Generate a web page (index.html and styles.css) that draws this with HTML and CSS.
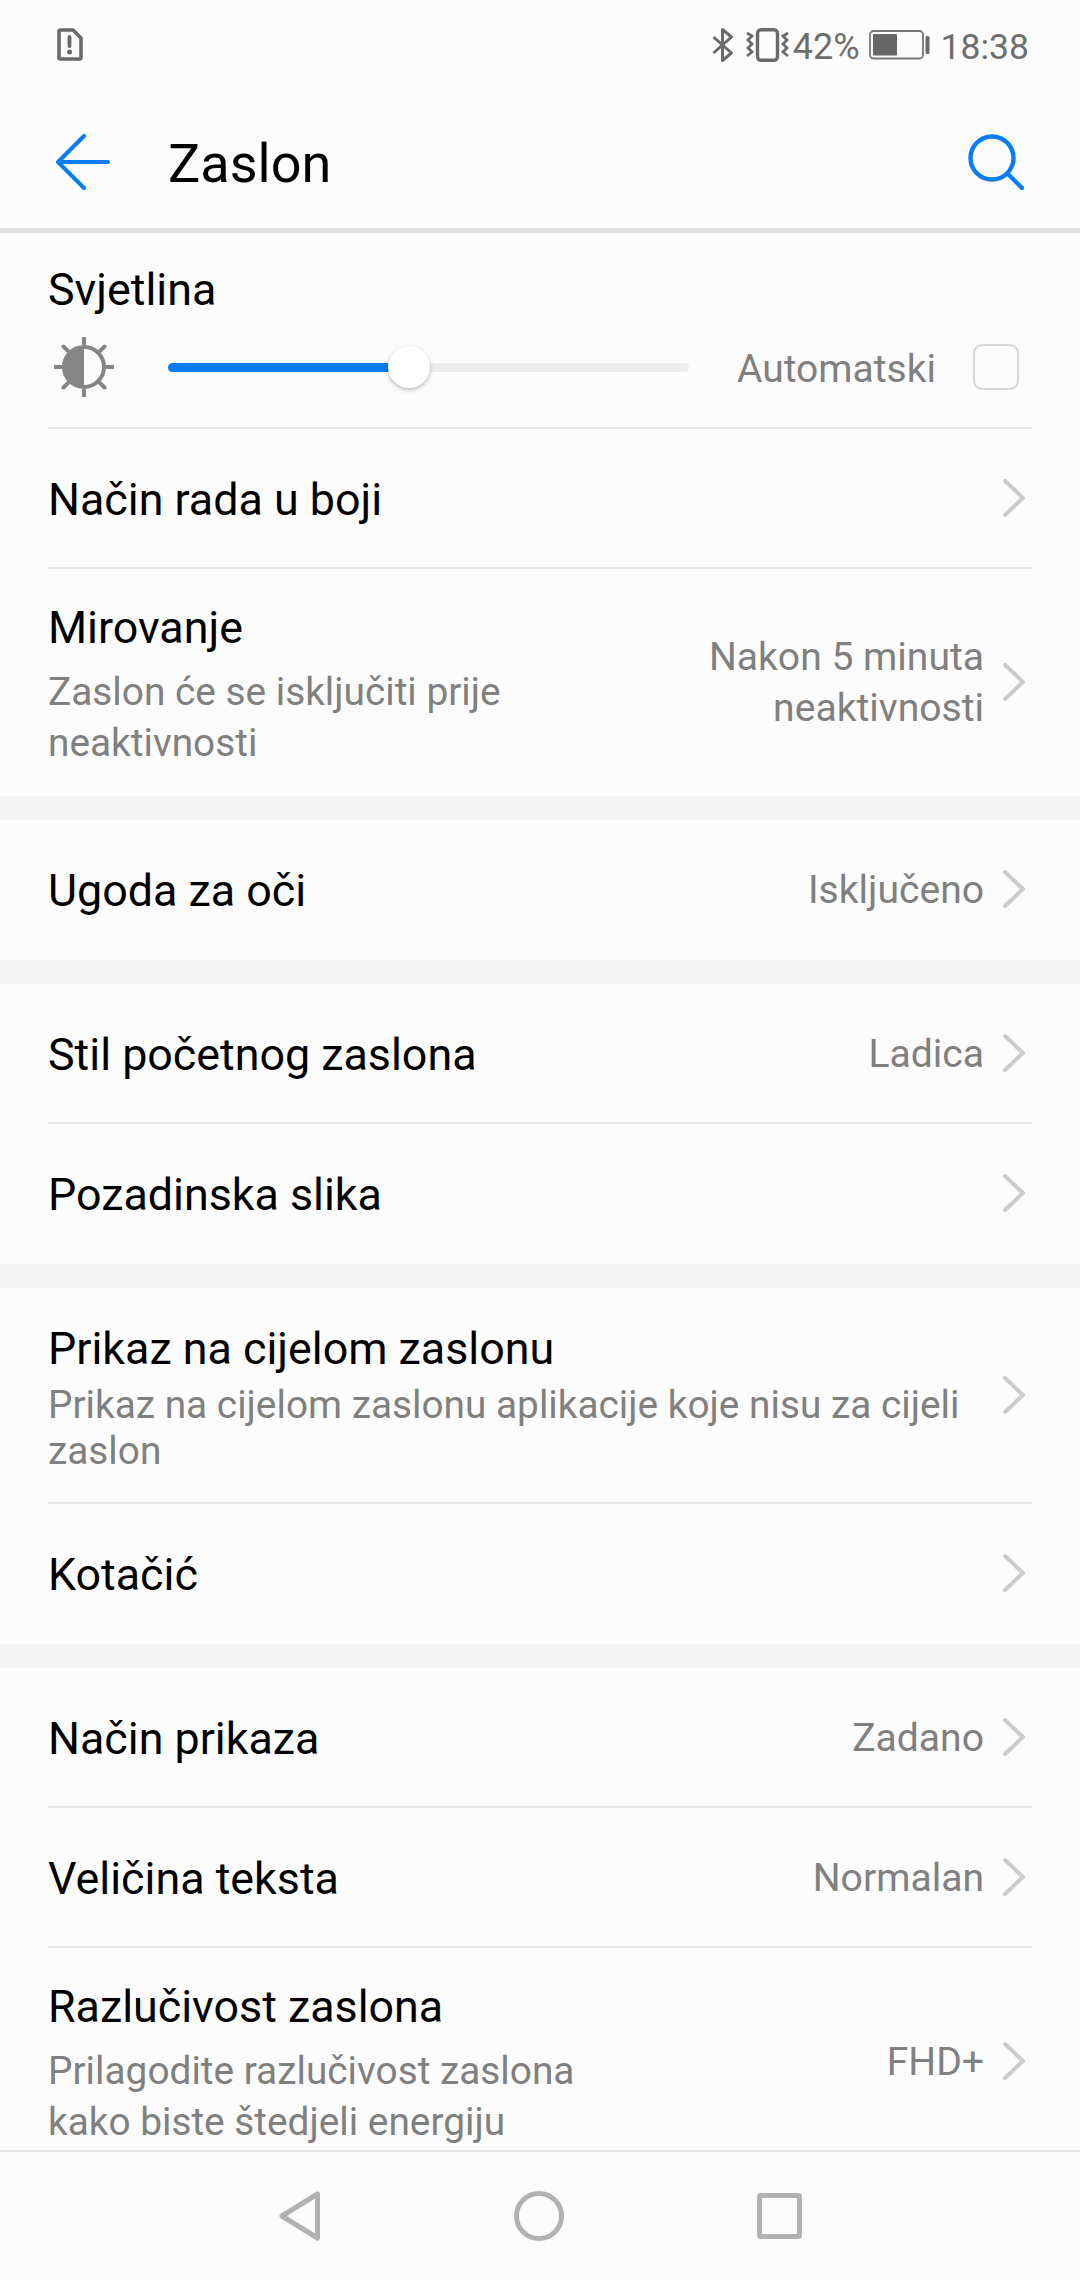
FILE: index.html
```html
<!DOCTYPE html>
<html lang="hr">
<head>
	<meta charset="UTF-8">
	<title>Zaslon</title>
	<link rel="stylesheet" href="styles.css">
</head>
<body>
<div class="phone">
	<div class="status">
		<svg class="ic-sim" width="26" height="33" viewBox="0 0 26 33"><path d="M4 2H16L24 10V29.500Q24 31 22.500 31H4Q2 31 2 29.500V3.500Q2 2 4 2Z" fill="none" stroke="#6a6a6a" stroke-width="3.600" stroke-linejoin="round"/><path d="M12.500 9V18" stroke="#6a6a6a" stroke-width="3.800" stroke-linecap="round"/><circle cx="12.500" cy="24" r="2.500" fill="#6a6a6a"/></svg>
		<div class="status-right">
			<svg class="ic-bt" width="22" height="34" viewBox="0 0 22 34"><path d="M1.500 9L19.500 25L10.500 32.500V1.500L19.500 9L1.500 25" fill="none" stroke="#6a6a6a" stroke-width="3" stroke-linejoin="round"/></svg>
			<svg class="ic-vib" width="43" height="34" viewBox="0 0 43 34"><rect x="11.500" y="1.800" width="20" height="30.400" rx="3.500" fill="none" stroke="#6a6a6a" stroke-width="3.400"/><path d="M1 5L6 8L2 12L6 16L2 20L6 24L1 28M42 5L37 8L41 12L37 16L41 20L37 24L42 28" fill="none" stroke="#6a6a6a" stroke-width="2.800"/></svg>
			<span class="pct">42%</span>
			<svg class="ic-bat" width="61" height="30" viewBox="0 0 61 30"><rect x="1" y="1" width="53" height="27.500" rx="3.500" fill="none" stroke="#777" stroke-width="1.800"/><rect x="4" y="4" width="24" height="21.500" rx="1" fill="#666"/><rect x="56.500" y="6" width="4" height="18" rx="1.500" fill="#6a6a6a"/></svg>
			<span class="clock">18:38</span>
		</div>
	</div>

	<div class="header">
		<svg class="ic-back" width="54" height="56" viewBox="0 0 54 56"><path d="M28 2L2 28L28 54M2 28H52" fill="none" stroke="#0a7df5" stroke-width="4" stroke-linecap="round" stroke-linejoin="round"/></svg>
		<div class="header-title">Zaslon</div>
		<svg class="ic-search" width="56" height="56" viewBox="0 0 56 56"><circle cx="24" cy="24" r="21.500" fill="none" stroke="#0a7df5" stroke-width="4.400"/><path d="M40 40L54 54" stroke="#0a7df5" stroke-width="4.400" stroke-linecap="round"/></svg>
	</div>

	<div class="list">
		<div class="section">
			<div class="brightness">
				<div class="title">Svjetlina</div>
				<div class="bright-row">
					<svg class="ic-sun" width="60" height="60" viewBox="0 0 60 60">
						<path d="M30 9A21 21 0 0 0 30 51Z" fill="#858585"/>
						<circle cx="30" cy="30" r="20" fill="none" stroke="#858585" stroke-width="4"/>
						<path d="M30 1V7M30 53V59M1 30H7M53 30H59M9.500 9.500L13.800 13.800M46.200 46.200L50.500 50.500M9.500 50.500L13.800 46.200M46.200 13.800L50.500 9.500" stroke="#858585" stroke-width="4" stroke-linecap="round"/>
					</svg>
					<div class="slider">
						<div class="slider-fill"></div>
						<div class="slider-thumb"></div>
					</div>
					<span class="auto">Automatski</span>
					<span class="check"></span>
				</div>
			</div>
			<div class="row">
				<div class="row-main"><div class="title">Način rada u boji</div></div>
				<svg class="chev" width="22" height="38" viewBox="0 0 22 38"><path d="M2 2L20 19L2 36" fill="none" stroke="#cbcbcb" stroke-width="4" stroke-linecap="round" stroke-linejoin="round"/></svg>
			</div>
			<div class="row row-tall">
				<div class="row-main">
					<div class="title">Mirovanje</div>
					<div class="sub">Zaslon će se isključiti prije<br>neaktivnosti</div>
				</div>
				<div class="value">Nakon 5 minuta<br>neaktivnosti</div>
				<svg class="chev" width="22" height="38" viewBox="0 0 22 38"><path d="M2 2L20 19L2 36" fill="none" stroke="#cbcbcb" stroke-width="4" stroke-linecap="round" stroke-linejoin="round"/></svg>
			</div>
		</div>

		<div class="section">
			<div class="row">
				<div class="row-main"><div class="title">Ugoda za oči</div></div>
				<div class="value">Isključeno</div>
				<svg class="chev" width="22" height="38" viewBox="0 0 22 38"><path d="M2 2L20 19L2 36" fill="none" stroke="#cbcbcb" stroke-width="4" stroke-linecap="round" stroke-linejoin="round"/></svg>
			</div>
		</div>

		<div class="section">
			<div class="row">
				<div class="row-main"><div class="title">Stil početnog zaslona</div></div>
				<div class="value">Ladica</div>
				<svg class="chev" width="22" height="38" viewBox="0 0 22 38"><path d="M2 2L20 19L2 36" fill="none" stroke="#cbcbcb" stroke-width="4" stroke-linecap="round" stroke-linejoin="round"/></svg>
			</div>
			<div class="row">
				<div class="row-main"><div class="title">Pozadinska slika</div></div>
				<svg class="chev" width="22" height="38" viewBox="0 0 22 38"><path d="M2 2L20 19L2 36" fill="none" stroke="#cbcbcb" stroke-width="4" stroke-linecap="round" stroke-linejoin="round"/></svg>
			</div>
		</div>

		<div class="section">
			<div class="row row-full">
				<div class="row-main">
					<div class="title">Prikaz na cijelom zaslonu</div>
					<div class="sub sub-tight">Prikaz na cijelom zaslonu aplikacije koje nisu za cijeli<br>zaslon</div>
				</div>
				<svg class="chev" width="22" height="38" viewBox="0 0 22 38"><path d="M2 2L20 19L2 36" fill="none" stroke="#cbcbcb" stroke-width="4" stroke-linecap="round" stroke-linejoin="round"/></svg>
			</div>
			<div class="row">
				<div class="row-main"><div class="title">Kotačić</div></div>
				<svg class="chev" width="22" height="38" viewBox="0 0 22 38"><path d="M2 2L20 19L2 36" fill="none" stroke="#cbcbcb" stroke-width="4" stroke-linecap="round" stroke-linejoin="round"/></svg>
			</div>
		</div>

		<div class="section">
			<div class="row">
				<div class="row-main"><div class="title">Način prikaza</div></div>
				<div class="value">Zadano</div>
				<svg class="chev" width="22" height="38" viewBox="0 0 22 38"><path d="M2 2L20 19L2 36" fill="none" stroke="#cbcbcb" stroke-width="4" stroke-linecap="round" stroke-linejoin="round"/></svg>
			</div>
			<div class="row">
				<div class="row-main"><div class="title">Veličina teksta</div></div>
				<div class="value">Normalan</div>
				<svg class="chev" width="22" height="38" viewBox="0 0 22 38"><path d="M2 2L20 19L2 36" fill="none" stroke="#cbcbcb" stroke-width="4" stroke-linecap="round" stroke-linejoin="round"/></svg>
			</div>
			<div class="row row-tall">
				<div class="row-main">
					<div class="title">Razlučivost zaslona</div>
					<div class="sub">Prilagodite razlučivost zaslona<br>kako biste štedjeli energiju</div>
				</div>
				<div class="value">FHD+</div>
				<svg class="chev" width="22" height="38" viewBox="0 0 22 38"><path d="M2 2L20 19L2 36" fill="none" stroke="#cbcbcb" stroke-width="4" stroke-linecap="round" stroke-linejoin="round"/></svg>
			</div>
		</div>
	</div>

	<div class="nav">
		<svg width="42" height="50" viewBox="0 0 42 50"><path d="M38.500 3L3 25L38.500 47Z" fill="none" stroke="#b2b2b2" stroke-width="5" stroke-linejoin="round"/></svg>
		<svg width="50" height="50" viewBox="0 0 50 50"><circle cx="25" cy="25" r="22.500" fill="none" stroke="#b2b2b2" stroke-width="5"/></svg>
		<svg width="45" height="46" viewBox="0 0 45 46"><rect x="2.500" y="2.500" width="40" height="41" rx="1.500" fill="none" stroke="#b2b2b2" stroke-width="5"/></svg>
	</div>
</div>
</body>
</html>
```

FILE: styles.css
```css
*{
	margin: 0;
	padding: 0;
	box-sizing: border-box;
}
body{
	background: #fcfcfc;
	font-family: Roboto, "Noto Sans", sans-serif;
	color: #000;
}
.phone{
	width: 1080px;
	height: 2280px;
	display: flex;
	flex-direction: column;
	overflow: hidden;
}
/* status bar */
.status{
	height: 90px;
	flex: none;
	display: flex;
	align-items: center;
	justify-content: space-between;
	padding: 0 51px 0 57px;
	color: #6e6e6e;
}
.status-right{
	display: flex;
	align-items: center;
}
.pct{
	font-size: 36px;
	padding-top: 3px;
	margin-left: 4px;
}
.ic-sim{
	margin-bottom: 1px;
}
.ic-vib{
	margin-left: 12px;
}
.ic-bat{
	margin-left: 9px;
}
.clock{
	font-size: 35.500px;
	padding-top: 3px;
	margin-left: 11px;
}
/* title bar */
.header{
	height: 143px;
	flex: none;
	display: flex;
	align-items: center;
	padding: 11px 56px 5px 56px;
	border-bottom: 5px solid #e0e0e0;
}
.header-title{
	flex: 1;
	font-size: 54px;
	line-height: 62px;
	padding-top: 3px;
	margin-left: 58px;
}
/* list */
.list{
	flex: 1;
	min-height: 0;
	overflow: hidden;
	background: #f4f4f4;
}
.section{
	background: #fcfcfc;
	margin-bottom: 24px;
}
.title{
	font-size: 44.800px;
	line-height: 52px;
}
.sub{
	font-size: 38.800px;
	line-height: 51px;
	color: #808080;
	margin-top: 12px;
}
.sub-tight{
	line-height: 46px;
	margin-top: 7px;
}
.value{
	font-size: 39.100px;
	line-height: 51px;
	color: #808080;
	text-align: right;
	margin-right: 19px;
	padding-top: 3px;
}
.row{
	height: 140px;
	margin: 0 48px;
	padding-right: 7px;
	display: flex;
	align-items: center;
	border-bottom: 2px solid #e6e6e6;
}
.section .row:last-child{
	border-bottom-color: transparent;
}
.row-tall{
	height: 227px;
}
.row-full{
	height: 216px;
}
.row-main{
	flex: 1;
	padding-top: 3px;
}
.row-tall .row-main, .row-full .row-main{
	padding-top: 6px;
}
.chev{
	flex: none;
}
/* brightness */
.brightness{
	height: 196px;
	margin: 0 48px;
	padding-top: 31px;
	border-bottom: 2px solid #e6e6e6;
}
.bright-row{
	display: flex;
	align-items: center;
	margin-top: 21px;
	height: 60px;
}
.ic-sun{
	margin-left: 6px;
	flex: none;
}
.slider{
	position: relative;
	width: 521px;
	height: 9px;
	margin-left: 54px;
	background: #eeeeee;
	border-radius: 5px;
}
.slider-fill{
	width: 241px;
	height: 100%;
	background: #0a7df5;
	border-radius: 5px 0 0 5px;
}
.slider-thumb{
	position: absolute;
	left: 220px;
	top: -17px;
	width: 42px;
	height: 42px;
	border-radius: 50%;
	background: #fff;
	box-shadow: 0 2px 4px rgba(0,0,0,.25);
}
.auto{
	font-size: 39px;
	color: #808080;
	margin-left: 48px;
	padding-top: 3px;
}
.check{
	width: 46px;
	height: 46px;
	margin-left: 37px;
	border: 2.500px solid #d6d6d6;
	border-radius: 9px;
}
/* bottom nav */
.nav{
	height: 130px;
	flex: none;
	display: flex;
	align-items: center;
	justify-content: center;
	gap: 193px;
	background: #fcfcfc;
	border-top: 2px solid #e4e4e4;
}
```
